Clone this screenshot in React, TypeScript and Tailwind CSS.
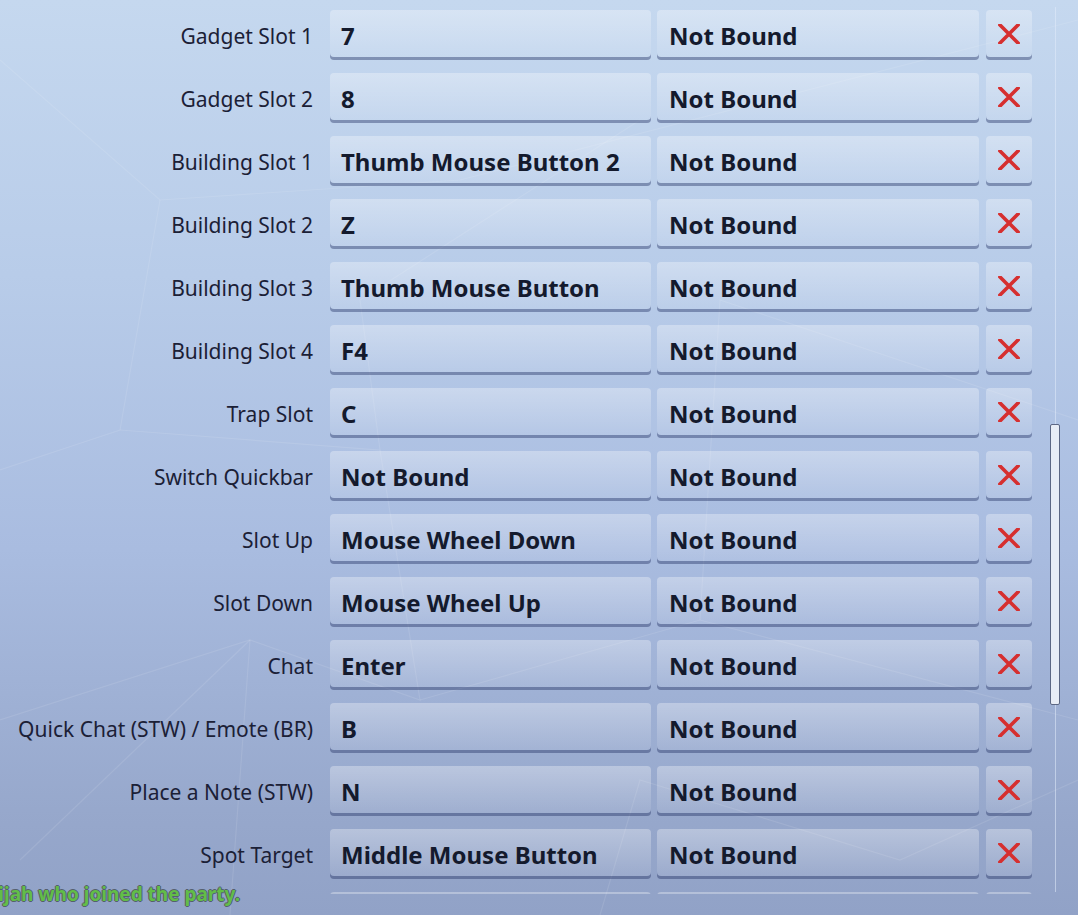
import React from "react";

const rows: { label: string; primary: string; secondary: string }[] = [
  { label: "Gadget Slot 1", primary: "7", secondary: "Not Bound" },
  { label: "Gadget Slot 2", primary: "8", secondary: "Not Bound" },
  { label: "Building Slot 1", primary: "Thumb Mouse Button 2", secondary: "Not Bound" },
  { label: "Building Slot 2", primary: "Z", secondary: "Not Bound" },
  { label: "Building Slot 3", primary: "Thumb Mouse Button", secondary: "Not Bound" },
  { label: "Building Slot 4", primary: "F4", secondary: "Not Bound" },
  { label: "Trap Slot", primary: "C", secondary: "Not Bound" },
  { label: "Switch Quickbar", primary: "Not Bound", secondary: "Not Bound" },
  { label: "Slot Up", primary: "Mouse Wheel Down", secondary: "Not Bound" },
  { label: "Slot Down", primary: "Mouse Wheel Up", secondary: "Not Bound" },
  { label: "Chat", primary: "Enter", secondary: "Not Bound" },
  { label: "Quick Chat (STW) / Emote (BR)", primary: "B", secondary: "Not Bound" },
  { label: "Place a Note (STW)", primary: "N", secondary: "Not Bound" },
  { label: "Spot Target", primary: "Middle Mouse Button", secondary: "Not Bound" },
  // next row, scrolled just past the bottom edge
  { label: "", primary: "", secondary: "" },
];

const face =
  "h-[47px] rounded-[4px] bg-[linear-gradient(to_bottom,rgba(255,255,255,0.32),rgba(255,255,255,0.08))] shadow-[0_3px_0_rgba(35,50,100,0.42)]";

function ClearIcon() {
  return (
    <svg width="22" height="20" viewBox="0 0 22 20">
      <path d="M2 1 L20 19 M20 1 L2 19" stroke="#d62f2f" strokeWidth="3.6" strokeLinecap="square" />
    </svg>
  );
}

function BindRow({ label, primary, secondary }: { label: string; primary: string; secondary: string }) {
  return (
    <div className="flex items-start h-[50px] shrink-0">
      <div className="w-[313px] h-[47px] flex items-center justify-end text-[21px] text-[#1b2036] whitespace-nowrap pt-[6px]">
        {label}
      </div>
      <div className={`${face} ml-[17px] w-[321px] flex items-center pl-[11px] pt-[4px] text-[24px] font-bold text-[#141a2d] whitespace-nowrap`}>
        {primary}
      </div>
      <div className={`${face} ml-[6px] w-[322px] flex items-center pl-[12px] pt-[4px] text-[24px] font-bold text-[#141a2d] whitespace-nowrap`}>
        {secondary}
      </div>
      <div className={`${face} ml-[7px] w-[46px] flex items-center justify-center`}>
        {label && <ClearIcon />}
      </div>
    </div>
  );
}

export default function App() {
  return (
    <div className="relative w-[1078px] h-[915px] overflow-hidden bg-[linear-gradient(to_bottom,#c5d8ef_0%,#b8cce9_30%,#a9bce0_60%,#96a7cb_90%,#91a2c7_100%)] font-['Noto_Sans',sans-serif]">
      {/* faint network lines in the backdrop */}
      <svg className="absolute inset-0 pointer-events-none" width="1078" height="915">
        <g stroke="rgba(255,255,255,0.1)" strokeWidth="1.2" fill="none">
          <path d="M0 60 L160 200 L460 180 L1078 20" />
          <path d="M160 200 L120 430 L0 470" />
          <path d="M120 430 L380 450 L360 300 L640 120" />
          <path d="M380 450 L420 700 L250 640 L0 720" />
          <path d="M420 700 L700 620 L1078 720" />
          <path d="M700 620 L720 300 L1078 420" />
          <path d="M250 640 L230 915" />
          <path d="M600 915 L640 780 L900 860 L1078 780" />
          <path d="M20 860 L250 640" />
        </g>
      </svg>

      <div className="relative flex">
        <div className="h-[894px] overflow-hidden pt-[10px] flex flex-col gap-[13px]">
          {rows.map((r, i) => (
            <BindRow key={i} {...r} />
          ))}
        </div>
        <div className="ml-[18px] mt-[7px] w-[10px] h-[885px] bg-[linear-gradient(to_right,transparent_5px,rgba(225,235,250,0.55)_5px,rgba(225,235,250,0.55)_6px,transparent_6px)]">
          <div className="mt-[417px] h-[281px] rounded-[2px] border border-[#5c6784] bg-[#e8edf6]" />
        </div>
      </div>

      <div className="absolute left-[-18px] top-[881px] text-[19px] leading-[26px] font-bold text-[#62bd48] whitespace-nowrap [text-shadow:1px_0_0_#55606e,-1px_0_0_#55606e,0_1px_0_#55606e,0_-1px_0_#55606e]">
        Elijah who joined the party.
      </div>
    </div>
  );
}
